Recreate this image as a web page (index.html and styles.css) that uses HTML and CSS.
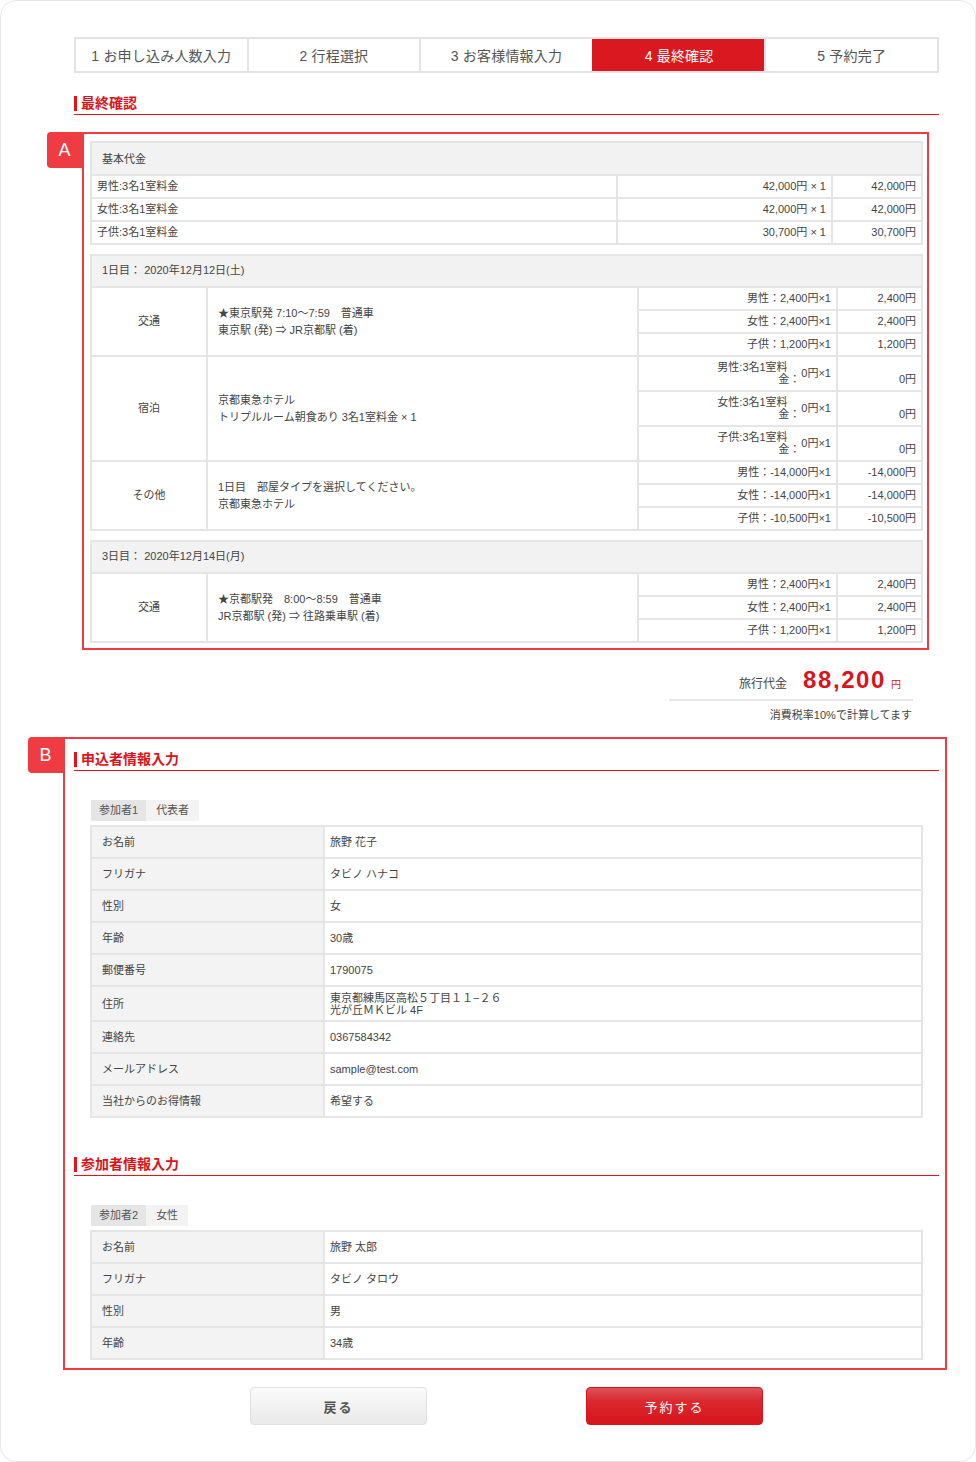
FILE: index.html
```html
<!DOCTYPE html>
<html lang="ja">
<head>
<meta charset="utf-8">
<title>最終確認</title>
<link rel="stylesheet" href="styles.css">
</head>
<body>
<div class="card">
  <div class="steps">
    <div class="step">1 お申し込み人数入力</div>
    <div class="step">2 行程選択</div>
    <div class="step">3 お客様情報入力</div>
    <div class="step active">4 最終確認</div>
    <div class="step">5 予約完了</div>
  </div>

  <h2 class="h"><span>最終確認</span></h2>

  <div class="box box-a">
    <div class="tag">A</div>
    <table class="t basic">
      <colgroup><col style="width:526px"><col style="width:215px"><col style="width:90px"></colgroup>
      <tr><th colspan="3" class="hd">基本代金</th></tr>
      <tr><td class="nm">男性:3名1室料金</td><td class="r">42,000円 × 1</td><td class="r">42,000円</td></tr>
      <tr><td class="nm">女性:3名1室料金</td><td class="r">42,000円 × 1</td><td class="r">42,000円</td></tr>
      <tr><td class="nm">子供:3名1室料金</td><td class="r">30,700円 × 1</td><td class="r">30,700円</td></tr>
    </table>

    <table class="t day">
      <colgroup><col style="width:116px"><col style="width:431px"><col style="width:199px"><col style="width:85px"></colgroup>
      <tr><th colspan="4" class="hd">1日目： 2020年12月12日(土)</th></tr>
      <tr><td class="lb" rowspan="3">交通</td><td class="ds" rowspan="3">★東京駅発 7:10〜7:59　普通車<br>東京駅 (発) ⇒ JR京都駅 (着)</td><td class="r">男性：2,400円×1</td><td class="r">2,400円</td></tr>
      <tr><td class="r">女性：2,400円×1</td><td class="r">2,400円</td></tr>
      <tr><td class="r">子供：1,200円×1</td><td class="r">1,200円</td></tr>
      <tr><td class="lb" rowspan="3">宿泊</td><td class="ds" rowspan="3">京都東急ホテル<br>トリプルルーム朝食あり 3名1室料金 × 1</td><td class="r st"><div class="stk"><span class="wn">男性:3名1室料金：</span><span>0円×1</span></div></td><td class="r bt">0円</td></tr>
      <tr><td class="r st"><div class="stk"><span class="wn">女性:3名1室料金：</span><span>0円×1</span></div></td><td class="r bt">0円</td></tr>
      <tr><td class="r st"><div class="stk"><span class="wn">子供:3名1室料金：</span><span>0円×1</span></div></td><td class="r bt">0円</td></tr>
      <tr><td class="lb" rowspan="3">その他</td><td class="ds" rowspan="3">1日目　部屋タイプを選択してください。<br>京都東急ホテル</td><td class="r">男性：-14,000円×1</td><td class="r">-14,000円</td></tr>
      <tr><td class="r">女性：-14,000円×1</td><td class="r">-14,000円</td></tr>
      <tr><td class="r">子供：-10,500円×1</td><td class="r">-10,500円</td></tr>
    </table>

    <table class="t day">
      <colgroup><col style="width:116px"><col style="width:431px"><col style="width:199px"><col style="width:85px"></colgroup>
      <tr><th colspan="4" class="hd">3日目： 2020年12月14日(月)</th></tr>
      <tr><td class="lb" rowspan="3">交通</td><td class="ds" rowspan="3">★京都駅発　8:00〜8:59　普通車<br>JR京都駅 (発) ⇒ 往路乗車駅 (着)</td><td class="r">男性：2,400円×1</td><td class="r">2,400円</td></tr>
      <tr><td class="r">女性：2,400円×1</td><td class="r">2,400円</td></tr>
      <tr><td class="r">子供：1,200円×1</td><td class="r">1,200円</td></tr>
    </table>
  </div>

  <div class="total">
    <div class="total-row"><span class="tl">旅行代金</span><span class="amt">88,200</span><span class="yen">円</span></div>
    <div class="tax">消費税率10%で計算してます</div>
  </div>

  <div class="box box-b">
    <div class="tag">B</div>
    <h2 class="h"><span>申込者情報入力</span></h2>
    <div class="tabs"><span class="tab1">参加者1</span><span class="tab2">代表者</span></div>
    <table class="t info">
      <colgroup><col style="width:233px"><col style="width:598px"></colgroup>
      <tr><th>お名前</th><td>旅野 花子</td></tr>
      <tr><th>フリガナ</th><td>タビノ ハナコ</td></tr>
      <tr><th>性別</th><td>女</td></tr>
      <tr><th>年齢</th><td>30歳</td></tr>
      <tr><th>郵便番号</th><td>1790075</td></tr>
      <tr class="two"><th>住所</th><td>東京都練馬区高松５丁目１１−２６<br>光が丘ＭＫビル 4F</td></tr>
      <tr><th>連絡先</th><td>0367584342</td></tr>
      <tr><th>メールアドレス</th><td>sample@test.com</td></tr>
      <tr><th>当社からのお得情報</th><td>希望する</td></tr>
    </table>

    <h2 class="h h2"><span>参加者情報入力</span></h2>
    <div class="tabs"><span class="tab1">参加者2</span><span class="tab2">女性</span></div>
    <table class="t info">
      <colgroup><col style="width:233px"><col style="width:598px"></colgroup>
      <tr><th>お名前</th><td>旅野 太郎</td></tr>
      <tr><th>フリガナ</th><td>タビノ タロウ</td></tr>
      <tr><th>性別</th><td>男</td></tr>
      <tr><th>年齢</th><td>34歳</td></tr>
    </table>
  </div>

  <div class="buttons">
    <button class="btn back">戻る</button>
    <button class="btn go">予約する</button>
  </div>
</div>
</body>
</html>
```

FILE: styles.css
```css
* { box-sizing: border-box; }
html, body { margin: 0; padding: 0; background: #fff; }
body {
  font-family: "Liberation Sans", "Noto Sans CJK JP", sans-serif;
  color: #444;
  font-size: 11px;
}
.card {
  width: 976px;
  height: 1462px;
  border: 1px solid #e8e8e8;
  border-radius: 16px;
  padding: 36px 36px 0 73px;
}

/* steps */
.steps {
  display: flex;
  height: 36px;
  border: 2px solid #e3e3e3;
}
.step {
  flex: 1 1 0;
  display: flex;
  align-items: center;
  justify-content: center;
  font-size: 14px;
  color: #555;
  border-left: 2px solid #e3e3e3;
  letter-spacing: 0.2px;
}
.step:first-child { border-left: none; }
.step.active {
  background: #d9191f;
  color: #fff;
  border-left-color: #d9191f;
}

/* headings */
.h {
  margin: 21px 0 0 0;
  padding: 2px 0 3px 0;
  border-bottom: 1px solid #e3141c;
  font-weight: bold;
}
.h span {
  display: block;
  border-left: 3px solid #e3141c;
  padding-left: 4px;
  font-size: 14px;
  line-height: 15px;
  color: #d8141c;
}
.box-b .h { margin-top: 0; }
.box-b .h.h2 { margin-top: 37px; }

/* annotation boxes */
.box {
  position: relative;
  border: 2px solid #ef3b42;
}
.box-a {
  margin: 17px 0 0 8px;
  width: 847px;
  padding: 7px 6px 5px 6px;
}
.box-b {
  margin: 14px 0 0 -11px;
  width: 884px;
  padding: 11px 6px 8px 9px;
}
.tag {
  position: absolute;
  left: -37px;
  top: -2px;
  width: 35px;
  height: 36px;
  background: #ef3b42;
  color: #fff;
  border-radius: 4px 0 0 4px;
  font-family: "Liberation Sans", sans-serif;
  font-size: 18px;
  line-height: 36px;
  text-align: center;
}

/* tables */
.t {
  width: 831px;
  table-layout: fixed;
  border-collapse: collapse;
  border: 2px solid #e5e5e5;
}
.t td, .t th {
  border: 2px solid #e5e5e5;
  font-weight: normal;
  line-height: 15px;
  padding: 3px 6px;
  color: #444;
}
.t .hd {
  background: #f2f2f2;
  text-align: left;
  padding: 9px 10px 7px 10px;
}
.t .nm { padding-left: 5px; }
.t .r { text-align: right; padding-right: 5px; }
.day { margin-top: 9px; }
.day .hd { padding: 7px 10px 8px 10px; }
.day .lb { text-align: center; }
.day .ds { padding-left: 10px; line-height: 17px; }
.day td.st { padding-top: 4px; padding-bottom: 5px; }
.stk {
  display: flex;
  justify-content: flex-end;
  align-items: center;
}
.wn {
  width: 83px;
  line-height: 12px;
  text-align: left;
  text-align-last: right;
  margin-right: 1px;
}
.day td.bt { vertical-align: bottom; padding-bottom: 3px; }

/* total */
.total {
  width: 244px;
  margin: 15px 26px 0 auto;
}
.total-row {
  display: flex;
  justify-content: flex-end;
  align-items: baseline;
  padding: 0 12px 4px 0;
  border-bottom: 2px solid #e8e8e8;
}
.tl { font-size: 12px; color: #444; margin-right: 16px; }
.amt {
  font-size: 24px;
  line-height: 30px;
  font-weight: bold;
  color: #d8141c;
  letter-spacing: 1.6px;
}
.yen { font-size: 10px; color: #d8141c; margin-left: 5px; }
.tax {
  text-align: right;
  margin-top: 7px;
  padding-right: 1px;
  font-size: 11px;
  line-height: 15px;
  color: #444;
}

/* info */
.tabs {
  margin: 29px 0 0 17px;
  display: flex;
  height: 21px;
}
.tabs span {
  line-height: 21px;
  padding: 0 8px;
  color: #555;
}
.tab1 { background: #e5e5e5; }
.tab2 { background: #f3f3f3; padding: 0 10px !important; }
.info { margin: 4px 0 0 16px; }
.info th {
  background: #f3f3f3;
  text-align: left;
  padding: 8px 10px 7px 10px;
}
.info td { padding: 8px 5px 7px 5px; }
.info tr.two th, .info tr.two td { padding-top: 5px; padding-bottom: 4px; line-height: 12px; }
.info tr.two th { line-height: 24px; }

/* buttons */
.buttons {
  display: flex;
  justify-content: center;
  gap: 159px;
  margin-top: 17px;
}
.btn {
  width: 177px;
  height: 38px;
  border-radius: 4px;
  font-family: "Liberation Sans", "Noto Sans CJK JP", sans-serif;
  font-size: 13px;
  letter-spacing: 2px;
  cursor: pointer;
}
.btn.back {
  background: linear-gradient(#fbfbfb, #e9e9e9);
  border: 1px solid #e0e0e0;
  color: #555;
  font-weight: bold;
}
.btn.go {
  background: linear-gradient(#dd5259 0%, #da2a30 35%, #d7141a 100%);
  border: 1px solid #d7141a;
  color: #fff;
}
```
